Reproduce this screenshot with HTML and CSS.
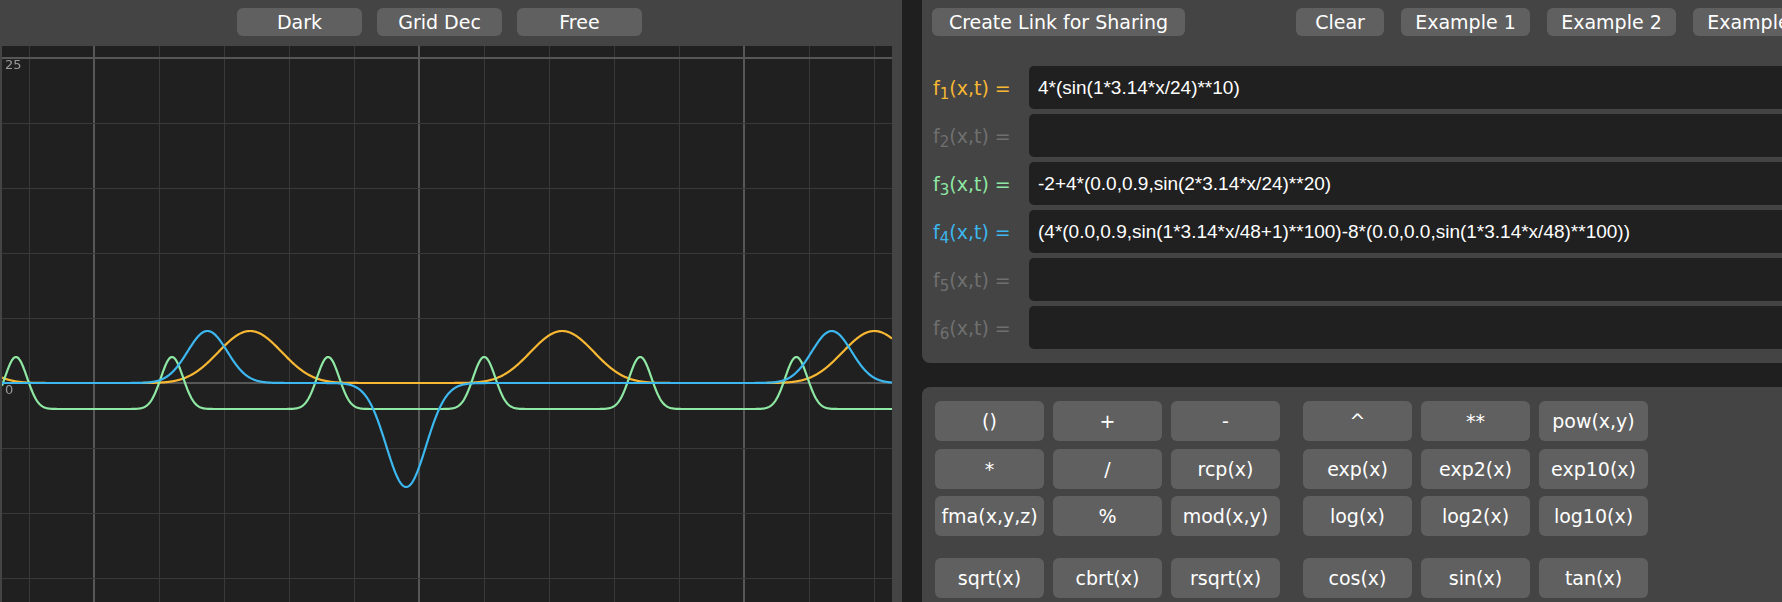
FILE: index.html
```html
<!DOCTYPE html>
<html lang="en">
<head>
    <meta charset="UTF-8">
    <meta name="viewport" content="width=device-width, initial-scale=1.0">
    <title>Function Plotter</title>
    <link rel="stylesheet" href="styles.css">
</head>
<body>
    <div class="app">
        <div class="plot-window">
            <div class="plot-toolbar">
                <button class="btn mode-btn">Dark</button>
                <button class="btn mode-btn">Grid Dec</button>
                <button class="btn mode-btn">Free</button>
            </div>
            <canvas id="plot" class="plot-canvas" width="890" height="556"></canvas>
        </div>

        <div class="side">
            <div class="panel editor-panel">
                <div class="editor-toolbar">
                    <button class="btn share-btn">Create Link for Sharing</button>
                    <button class="btn clear-btn">Clear</button>
                    <button class="btn example-btn">Example 1</button>
                    <button class="btn example-btn">Example 2</button>
                    <button class="btn example-btn">Example 3</button>
                </div>

                <div class="func-list">
                    <div class="func-row">
                        <span class="func-label fn-yellow">f<sub>1</sub>(x,t) =</span>
                        <input class="func-input" type="text" value="4*(sin(1*3.14*x/24)**10)">
                    </div>
                    <div class="func-row">
                        <span class="func-label fn-off">f<sub>2</sub>(x,t) =</span>
                        <input class="func-input" type="text" value="">
                    </div>
                    <div class="func-row">
                        <span class="func-label fn-green">f<sub>3</sub>(x,t) =</span>
                        <input class="func-input" type="text" value="-2+4*(0.0,0.9,sin(2*3.14*x/24)**20)">
                    </div>
                    <div class="func-row">
                        <span class="func-label fn-blue">f<sub>4</sub>(x,t) =</span>
                        <input class="func-input" type="text" value="(4*(0.0,0.9,sin(1*3.14*x/48+1)**100)-8*(0.0,0.0,sin(1*3.14*x/48)**100))">
                    </div>
                    <div class="func-row">
                        <span class="func-label fn-off">f<sub>5</sub>(x,t) =</span>
                        <input class="func-input" type="text" value="">
                    </div>
                    <div class="func-row">
                        <span class="func-label fn-off">f<sub>6</sub>(x,t) =</span>
                        <input class="func-input" type="text" value="">
                    </div>
                </div>
            </div>

            <div class="panel calc-panel">
                <div class="calc-section">
                    <div class="calc-group">
                        <button class="btn calc-btn">()</button>
                        <button class="btn calc-btn">+</button>
                        <button class="btn calc-btn">-</button>
                        <button class="btn calc-btn">*</button>
                        <button class="btn calc-btn">/</button>
                        <button class="btn calc-btn">rcp(x)</button>
                        <button class="btn calc-btn">fma(x,y,z)</button>
                        <button class="btn calc-btn">%</button>
                        <button class="btn calc-btn">mod(x,y)</button>
                    </div>
                    <div class="calc-group">
                        <button class="btn calc-btn">^</button>
                        <button class="btn calc-btn">**</button>
                        <button class="btn calc-btn">pow(x,y)</button>
                        <button class="btn calc-btn">exp(x)</button>
                        <button class="btn calc-btn">exp2(x)</button>
                        <button class="btn calc-btn">exp10(x)</button>
                        <button class="btn calc-btn">log(x)</button>
                        <button class="btn calc-btn">log2(x)</button>
                        <button class="btn calc-btn">log10(x)</button>
                    </div>
                </div>
                <div class="calc-section">
                    <div class="calc-group">
                        <button class="btn calc-btn">sqrt(x)</button>
                        <button class="btn calc-btn">cbrt(x)</button>
                        <button class="btn calc-btn">rsqrt(x)</button>
                    </div>
                    <div class="calc-group">
                        <button class="btn calc-btn">cos(x)</button>
                        <button class="btn calc-btn">sin(x)</button>
                        <button class="btn calc-btn">tan(x)</button>
                    </div>
                </div>
            </div>
        </div>
    </div>

    <script>
        // plot settings: origin in canvas pixels, 13 px per unit
        const canvas = document.getElementById('plot');
        const ctx = canvas.getContext('2d');
        const W = canvas.width, H = canvas.height;
        const ox = 92, oy = 337, scale = 13, step = 65;

        // (a, b, v) works like the comma operator: the last value wins
        const seq = (a, b, v) => v;

        const funcs = [
            { color: '#f8b834', f: x => 4 * Math.pow(Math.sin(1 * 3.14 * x / 24), 10) },
            { color: '#8fe8a3', f: x => -2 + 4 * seq(0.0, 0.9, Math.pow(Math.sin(2 * 3.14 * x / 24), 20)) },
            { color: '#3cb7ef', f: x => 4 * seq(0.0, 0.9, Math.pow(Math.sin(1 * 3.14 * x / 48 + 1), 100))
                                     - 8 * seq(0.0, 0.0, Math.pow(Math.sin(1 * 3.14 * x / 48), 100)) },
        ];

        ctx.fillStyle = '#202020';
        ctx.fillRect(0, 0, W, H);

        // grid
        for (let k = -2; k <= 14; k++) {
            const x = ox + k * step;
            if (x < 0 || x > W) continue;
            const major = k % 5 === 0;
            ctx.fillStyle = major ? '#575757' : '#393939';
            ctx.fillRect(major ? x - 1 : x, 0, major ? 2 : 1, H);
        }
        for (let k = -5; k <= 6; k++) {
            const y = oy - k * step;
            if (y < 0 || y > H) continue;
            const major = k % 5 === 0;
            ctx.fillStyle = major ? '#575757' : '#393939';
            ctx.fillRect(0, major ? y - 1 : y, W, major ? 2 : 1);
        }

        // axis labels
        ctx.fillStyle = '#9a9a9a';
        ctx.font = '13px "DejaVu Sans"';
        ctx.textBaseline = 'top';
        ctx.fillText('25', 3, 13);
        ctx.fillText('0', 3, 338);

        // curves
        ctx.lineWidth = 2.2;
        ctx.lineJoin = 'round';
        funcs.forEach(fn => {
            ctx.strokeStyle = fn.color;
            ctx.beginPath();
            for (let px = 0; px <= W; px += 0.5) {
                const y = oy - fn.f((px - ox) / scale) * scale;
                if (px === 0) ctx.moveTo(px, y);
                else ctx.lineTo(px, y);
            }
            ctx.stroke();
        });
    </script>
</body>
</html>
```

FILE: styles.css
```css
body {
    margin: 0;
    height: 100vh;
    overflow: hidden;
    background-color: #1f1f1f;
    font-family: "DejaVu Sans", Verdana, sans-serif;
    color: #fff;
}

.app {
    display: flex;
    height: 100vh;
}

/* левое окно с графиком */
.plot-window {
    flex-shrink: 0;
    width: 890px;
    padding: 0 10px 0 2px;
    background-color: #444;
    display: flex;
    flex-direction: column;
}

.plot-toolbar {
    box-sizing: border-box;
    height: 46px;
    padding: 8px 0 0 235px;
    display: flex;
    gap: 15px;
}

.plot-canvas {
    display: block;
    width: 890px;
    height: 556px;
}

.btn {
    height: 28px;
    padding: 0;
    border: none;
    border-radius: 6px;
    background-color: #606060;
    color: #fff;
    font-family: "DejaVu Sans", Verdana, sans-serif;
    font-size: 19px;
    white-space: nowrap;
    cursor: pointer;
}

.btn:hover {
    background-color: #6c6c6c;
}

.mode-btn {
    width: 125px;
}

/* правая часть */
.side {
    flex-shrink: 0;
    width: 1000px;
    margin-left: 20px;
    display: flex;
    flex-direction: column;
    gap: 24px;
}

.panel {
    background-color: #444;
}

.editor-panel {
    box-sizing: border-box;
    height: 363px;
    padding: 8px 0 14px 10px;
    border-radius: 0 0 0 8px;
}

.editor-toolbar {
    display: flex;
    gap: 17px;
}

.share-btn {
    width: 253px;
    margin-right: 94px;
}

.clear-btn {
    width: 88px;
}

.example-btn {
    width: 129px;
}

.func-list {
    margin-top: 30px;
    display: flex;
    flex-direction: column;
    gap: 5px;
}

.func-row {
    display: flex;
    align-items: center;
    height: 43px;
    padding-left: 1px;
}

.func-label {
    flex-shrink: 0;
    width: 96px;
    font-size: 19px;
    white-space: nowrap;
}

.func-label sub {
    font-size: 15px;
    line-height: 0;
    vertical-align: -4px;
}

.fn-yellow { color: #f8b834; }
.fn-green { color: #8fe8a3; }
.fn-blue { color: #3cb7ef; }
.fn-off { color: #707070; }

.func-input {
    flex: 1;
    box-sizing: border-box;
    height: 43px;
    margin-right: 20px;
    padding: 0 9px;
    border: none;
    border-radius: 5px;
    outline: none;
    background-color: #202020;
    color: #fff;
    font-family: "Liberation Sans", Arial, sans-serif;
    font-size: 19px;
}

/* калькулятор */
.calc-panel {
    flex: 1;
    padding: 14px 0 0 13px;
    border-radius: 8px 0 0 0;
}

.calc-section {
    display: flex;
    gap: 23px;
}

.calc-section + .calc-section {
    margin-top: 22px;
}

.calc-group {
    display: grid;
    grid-template-columns: repeat(3, 109px);
    grid-auto-rows: 40px;
    column-gap: 9px;
    row-gap: 7.5px;
}

.calc-btn {
    height: 40px;
}
```
